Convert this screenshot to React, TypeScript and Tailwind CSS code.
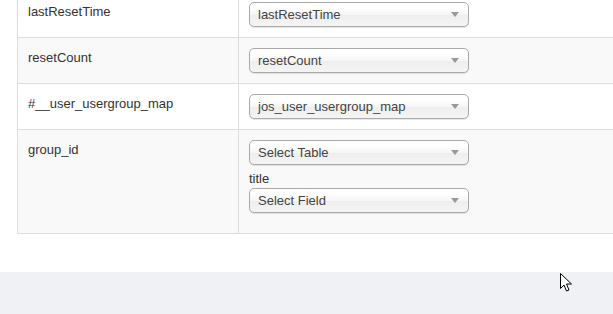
const rows = [
  { label: 'lastResetTime', value: 'lastResetTime', shade: false },
  { label: 'resetCount', value: 'resetCount', shade: true },
  { label: '#__user_usergroup_map', value: 'jos_user_usergroup_map', shade: false },
];

export default function App() {
  return (
    <div className="relative flex h-[314px] w-[613px] flex-col overflow-hidden bg-white font-['Liberation_Sans',Arial,sans-serif] text-[13px] text-[#333]">
      <div className="overflow-hidden pb-[38px]">
        <div className="-mt-[8px] ml-[17px] w-[720px] border-l border-[#ddd]">
          {rows.map((row) => (
            <div
              key={row.label}
              className={`grid grid-cols-[220px_1fr] border-b border-[#ddd] ${row.shade ? 'bg-[#f9f9f9]' : 'bg-white'}`}
            >
              <div className="px-[10px] pt-[11px] leading-[18px]">{row.label}</div>
              <div className="border-l border-[#ddd] px-[10px] py-[10px]">
                <SelectBox text={row.value} />
              </div>
            </div>
          ))}
          <div className="grid grid-cols-[220px_1fr] border-b border-[#ddd] bg-[#f9f9f9]">
            <div className="px-[10px] pt-[11px] leading-[18px]">group_id</div>
            <div className="border-l border-[#ddd] px-[10px] pt-[10px] pb-[20px]">
              <SelectBox text="Select Table" />
              <p className="pt-[5px] leading-[18px]">title</p>
              <SelectBox text="Select Field" />
            </div>
          </div>
        </div>
      </div>
      <div className="flex-1 bg-[#f0f1f5]" />
      <svg
        className="absolute left-[560px] top-[273px]"
        width="13"
        height="20"
        viewBox="0 0 13 20"
        aria-hidden="true"
      >
        <path
          d="M0.5 0.5 L0.5 15.5 L4 12 L6.5 18 L9 17 L6.5 11 L11.5 11 Z"
          fill="#fff"
          stroke="#000"
          strokeWidth="1"
          strokeLinejoin="miter"
        />
      </svg>
    </div>
  );
}

function SelectBox(props: { text: string }) {
  return (
    <div className="flex h-[25px] w-[220px] items-center justify-between rounded-[5px] border border-[#aaa] bg-[linear-gradient(#fff_20%,#f6f6f6_50%,#eee_52%,#f4f4f4_100%)] pl-[8px] pr-[9px] text-[#444] shadow-[0_1px_1px_rgba(0,0,0,0.1)]">
      <span className="pt-[1px] leading-[18px]">{props.text}</span>
      <svg width="8" height="5" viewBox="0 0 8 5" aria-hidden="true">
        <path d="M0 0 L8 0 L4 5 Z" fill="#999" />
      </svg>
    </div>
  );
}
